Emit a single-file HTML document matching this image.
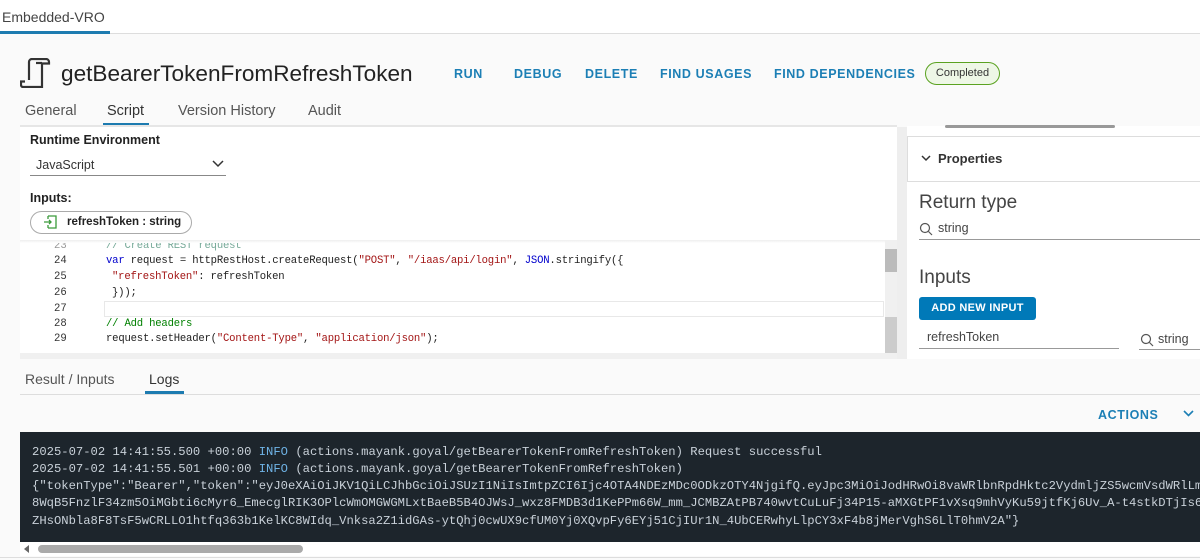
<!DOCTYPE html>
<html><head><meta charset="utf-8"><style>
*{box-sizing:border-box;margin:0;padding:0}
body{width:1200px;height:560px;overflow:hidden;background:#fafafa;font-family:"Liberation Sans",sans-serif;color:#333;position:relative}
.a{position:absolute;white-space:nowrap}
.lnk{position:absolute;top:67px;font-size:12.5px;font-weight:bold;color:#1c7fb5;letter-spacing:.6px}
.tab{position:absolute;font-size:14.5px;color:#555}
.code{position:absolute;left:0;font-family:"Liberation Mono",monospace;font-size:10.6px;color:#222;white-space:pre;letter-spacing:-.2px}
.ln{position:absolute;left:54px;font-family:"Liberation Mono",monospace;font-size:10.6px;color:#333}
.log{position:absolute;left:32px;font-family:"Liberation Mono",monospace;font-size:12.2px;color:#c9d1d9;white-space:pre}
.s{color:#a31515}.k{color:#0000cc}.c{color:#008000}
</style></head><body>
<div class="a" style="left:0;top:0;width:1200px;height:34px;background:#fff;border-bottom:1px solid #ddd"></div>
<div class="a" style="left:2px;top:9px;font-size:14px;color:#444">Embedded-VRO</div>
<div class="a" style="left:0;top:31px;width:110px;height:3px;background:#1d7bb0"></div>

<svg class="a" style="left:20px;top:58px" width="32" height="30" viewBox="0 0 32 30" fill="none" stroke="#333" stroke-width="2.2"><path d="M9 22V4a3 3 0 0 1 3-3h14a3 3 0 0 1 3 3v1.5h-7V29H3a2 2 0 0 1-2-2v-3.5h4"/><path d="M22 5h-6"/></svg>
<div class="a" style="left:61px;top:61px;font-size:22.6px;color:#222">getBearerTokenFromRefreshToken</div>
<div class="lnk" style="left:454px">RUN</div>
<div class="lnk" style="left:514px">DEBUG</div>
<div class="lnk" style="left:585px">DELETE</div>
<div class="lnk" style="left:660px">FIND USAGES</div>
<div class="lnk" style="left:774px">FIND DEPENDENCIES</div>
<div class="a" style="left:925px;top:62px;width:75px;height:23px;border:1.5px solid #5aa220;border-radius:12px;background:#eef7e6;font-size:11px;color:#333;text-align:center;line-height:20px">Completed</div>

<div class="tab" style="left:25px;top:103px">General</div>
<div class="tab" style="left:107px;top:103px;color:#333">Script</div>
<div class="tab" style="left:178px;top:103px">Version History</div>
<div class="tab" style="left:308px;top:103px">Audit</div>
<div class="a" style="left:103px;top:123px;width:46px;height:3px;background:#1d7bb0"></div>
<div class="a" style="left:20px;top:125px;width:877px;height:2px;background:#e6e6e6"></div>

<div class="a" style="left:20px;top:127px;width:877px;height:226px;background:#fff"></div>
<div class="a" style="left:30px;top:133px;font-size:12.5px;font-weight:bold;color:#222">Runtime Environment</div>
<div class="a" style="left:36px;top:158px;font-size:12.5px;color:#333">JavaScript</div>
<svg class="a" style="left:212px;top:160px" width="12" height="8" viewBox="0 0 12 8"><path d="M1 1l5 5 5-5" fill="none" stroke="#333" stroke-width="1.5"/></svg>
<div class="a" style="left:30px;top:175px;width:196px;height:1px;background:#888"></div>
<div class="a" style="left:30px;top:191px;font-size:12.5px;font-weight:bold;color:#222">Inputs:</div>
<div class="a" style="left:30px;top:211px;width:162px;height:23px;border:1px solid #aaa;border-radius:12px;background:#fff"></div>
<svg class="a" style="left:43px;top:215px" width="14" height="14" viewBox="0 0 14 14" fill="none" stroke="#3a9a3a" stroke-width="1.3"><path d="M5 1h8v12H5M5 4V1M5 10v3M1 7h7M6 5l2 2-2 2"/></svg>
<div class="a" style="left:67px;top:216px;font-size:11.5px;font-weight:bold;color:#222">refreshToken : string</div>

<div class="ln" style="top:240px;color:#999">23</div>
<div class="code" style="left:106px;top:240px;color:#7a9">// Create REST request</div>
<div class="ln" style="top:255px">24</div><div class="code" style="left:106px;top:255px"><span class="k">var</span> request = httpRestHost.createRequest(<span class="s">"POST"</span>, <span class="s">"/iaas/api/login"</span>, <span class="k">JSON</span>.stringify({</div>
<div class="ln" style="top:271px">25</div><div class="code" style="left:112px;top:271px"><span class="s">"refreshToken"</span>: refreshToken</div>
<div class="ln" style="top:287px">26</div><div class="code" style="left:112px;top:287px">}));</div>
<div class="a" style="left:104px;top:301px;width:780px;height:16px;border:1px solid #e8e8e8"></div>
<div class="ln" style="top:303px">27</div>
<div class="ln" style="top:318px">28</div><div class="code c" style="left:106px;top:318px">// Add headers</div>
<div class="ln" style="top:333px">29</div><div class="code" style="left:106px;top:333px">request.setHeader(<span class="s">"Content-Type"</span>, <span class="s">"application/json"</span>);</div>
<div class="a" style="left:20px;top:240px;width:877px;height:3px;background:linear-gradient(#eee,#fff)"></div>
<div class="a" style="left:885px;top:240px;width:12px;height:113px;background:#f0f0f0"></div>
<div class="a" style="left:885px;top:249px;width:12px;height:23px;background:#bbb"></div>
<div class="a" style="left:885px;top:317px;width:12px;height:36px;background:#ccc"></div>
<div class="a" style="left:20px;top:353px;width:877px;height:6px;background:#f0f0f0"></div>
<div class="a" style="left:897px;top:127px;width:10px;height:232px;background:#eee"></div>

<div class="a" style="left:907px;top:126px;width:293px;height:233px;background:#fff"></div>
<div class="a" style="left:945px;top:125px;width:170px;height:3px;background:#999;border-radius:2px"></div>
<div class="a" style="left:907px;top:136px;width:293px;height:46px;border:1px solid #ddd;border-right:none"></div>
<svg class="a" style="left:921px;top:155px" width="10" height="7" viewBox="0 0 10 7"><path d="M1 1l4 4 4-4" fill="none" stroke="#333" stroke-width="1.5"/></svg>
<div class="a" style="left:938px;top:151px;font-size:13px;font-weight:bold;color:#333">Properties</div>
<div class="a" style="left:919px;top:192px;font-size:19px;color:#444">Return type</div>
<svg class="a" style="left:919px;top:222px" width="14" height="14" viewBox="0 0 14 14" fill="none" stroke="#555" stroke-width="1.2"><circle cx="6" cy="6" r="4.5"/><path d="M9.5 9.5L13 13"/></svg>
<div class="a" style="left:938px;top:221px;font-size:12.5px;color:#444">string</div>
<div class="a" style="left:919px;top:239px;width:281px;height:1px;background:#999"></div>
<div class="a" style="left:919px;top:267px;font-size:19px;color:#444">Inputs</div>
<div class="a" style="left:919px;top:297px;width:117px;height:23px;background:#0079b8;border-radius:3px;color:#fff;font-size:11px;font-weight:bold;text-align:center;line-height:23px;letter-spacing:.3px">ADD NEW INPUT</div>
<div class="a" style="left:927px;top:330px;font-size:12.5px;color:#444">refreshToken</div>
<div class="a" style="left:919px;top:348px;width:200px;height:1px;background:#999"></div>
<svg class="a" style="left:1140px;top:333px" width="14" height="14" viewBox="0 0 14 14" fill="none" stroke="#555" stroke-width="1.2"><circle cx="6" cy="6" r="4.5"/><path d="M9.5 9.5L13 13"/></svg>
<div class="a" style="left:1158px;top:332px;font-size:12.5px;color:#444">string</div>
<div class="a" style="left:1139px;top:349px;width:61px;height:1px;background:#999"></div>

<div class="tab" style="left:25px;top:371px;font-size:14px">Result / Inputs</div>
<div class="tab" style="left:149px;top:371px;font-size:14px;color:#333">Logs</div>
<div class="a" style="left:145px;top:391px;width:39px;height:3px;background:#1d7bb0"></div>
<div class="a" style="left:20px;top:394px;width:1180px;height:1px;background:#ddd"></div>
<div class="a" style="left:1098px;top:408px;font-size:12.5px;font-weight:bold;color:#1c7fb5;letter-spacing:.6px">ACTIONS</div>
<svg class="a" style="left:1183px;top:410px" width="11" height="8" viewBox="0 0 11 8"><path d="M1 1l4.5 4.5L10 1" fill="none" stroke="#1c7fb5" stroke-width="1.6"/></svg>

<div class="a" style="left:20px;top:432px;width:1180px;height:110px;background:#1d252c;overflow:hidden">
<div class="log" style="left:12px;top:13px">2025-07-02 14:41:55.500 +00:00 <span style="color:#6fb3e6">INFO</span> (actions.mayank.goyal/getBearerTokenFromRefreshToken) Request successful</div>
<div class="log" style="left:12px;top:30px">2025-07-02 14:41:55.501 +00:00 <span style="color:#6fb3e6">INFO</span> (actions.mayank.goyal/getBearerTokenFromRefreshToken)</div>
<div class="log" style="left:12px;top:47px">{"tokenType":"Bearer","token":"eyJ0eXAiOiJKV1QiLCJhbGciOiJSUzI1NiIsImtpZCI6Ijc4OTA4NDEzMDc0ODkzOTY4NjgifQ.eyJpc3MiOiJodHRwOi8vaWRlbnRpdHktc2VydmljZS5wcmVsdWRlLmNvbSJ9</div>
<div class="log" style="left:12px;top:64px">8WqB5FnzlF34zm5OiMGbti6cMyr6_EmecglRIK3OPlcWmOMGWGMLxtBaeB5B4OJWsJ_wxz8FMDB3d1KePPm66W_mm_JCMBZAtPB740wvtCuLuFj34P15-aMXGtPF1vXsq9mhVyKu59jtfKj6Uv_A-t4stkDTjIs6</div>
<div class="log" style="left:12px;top:82px">ZHsONbla8F8TsF5wCRLLO1htfq363b1KelKC8WIdq_Vnksa2Z1idGAs-ytQhj0cwUX9cfUM0Yj0XQvpFy6EYj51CjIUr1N_4UbCERwhyLlpCY3xF4b8jMerVghS6LlT0hmV2A"}</div>
</div>
<div class="a" style="left:20px;top:542px;width:1180px;height:14px;background:#fff"></div>
<svg class="a" style="left:24px;top:545px" width="6" height="8" viewBox="0 0 6 8"><path d="M5 0L0 4l5 4z" fill="#666"/></svg>
<div class="a" style="left:38px;top:545px;width:265px;height:8px;background:#aaa;border-radius:4px"></div>
<div class="a" style="left:0;top:557px;width:1200px;height:1px;background:#ddd"></div>
</body></html>
